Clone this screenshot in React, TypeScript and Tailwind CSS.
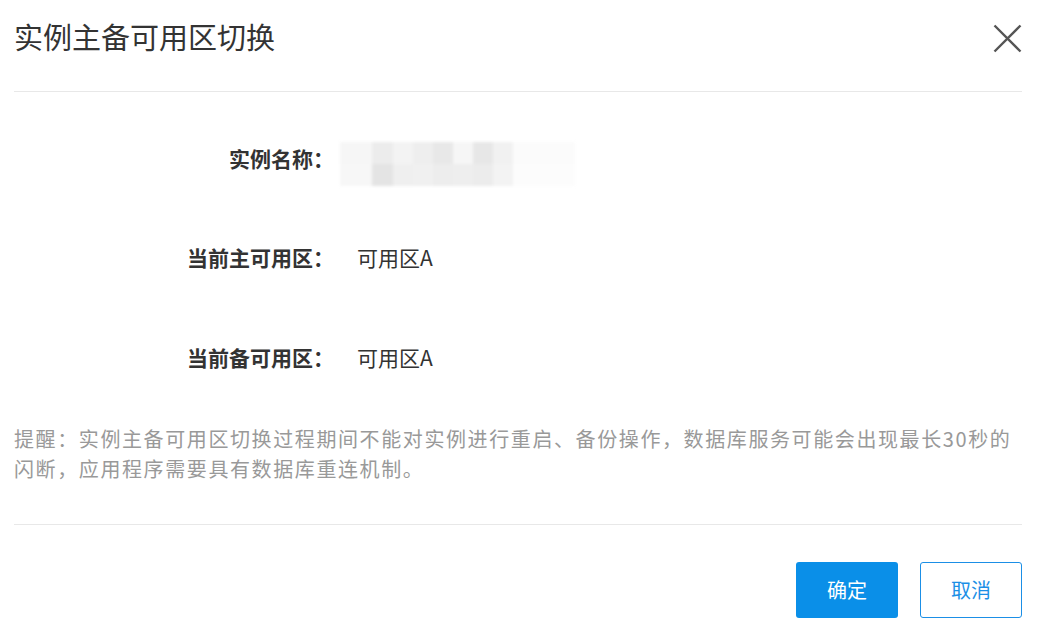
import React from 'react'

const font = { fontFamily: '"Noto Sans CJK SC", "Noto Sans", sans-serif' }

// blurred instance name placeholder
const topBlocks = [
  'w-[32px] bg-[#f6f6f6]',
  'w-[21px] bg-[#ececec]',
  'w-[20px] bg-[#f3f3f3]',
  'w-[20px] bg-[#eeeeee]',
  'w-[20px] bg-[#e8e8e8]',
  'w-[20px] bg-[#f6f6f6]',
  'w-[20px] bg-[#e7e7e7]',
  'w-[20px] bg-[#f1f1f1]',
  'w-[62px] bg-[#fbfbfb]',
]
const bottomBlocks = [
  'w-[32px] bg-[#f7f7f7]',
  'w-[21px] bg-[#e4e4e4]',
  'w-[20px] bg-[#efefef]',
  'w-[20px] bg-[#f0f0f0]',
  'w-[20px] bg-[#ededed]',
  'w-[20px] bg-[#eeeeee]',
  'w-[20px] bg-[#ececec]',
  'w-[20px] bg-[#f3f3f3]',
  'w-[62px] bg-[#fcfcfc]',
]

const Row: React.FC<{ label: string; children: React.ReactNode; className?: string }> = ({ label, children, className }) => (
  <div className={`flex items-center h-[44px] ${className ?? ''}`}>
    <div className="w-[320px] text-right text-[21px] font-bold text-[#333]">{label}</div>
    <div className="ml-[23px]">{children}</div>
  </div>
)

export default function App() {
  return (
    <div className="w-[1046px] h-[638px] bg-white pl-[14px] pr-[24px] overflow-hidden" style={font}>
      {/* header */}
      <div className="h-[92px] flex items-start justify-between border-b border-[#e8e8e8]">
        <h2 className="pt-[17px] text-[29px] leading-[38px] text-[#333]">实例主备可用区切换</h2>
        <button className="mt-[24px] w-[29px] h-[29px] flex items-center justify-center">
          <svg width="29" height="29" viewBox="0 0 29 29">
            <path d="M1.5 1.5 L27.5 27.5 M27.5 1.5 L1.5 27.5" stroke="#555" strokeWidth="2.4" fill="none" />
          </svg>
        </button>
      </div>

      {/* body */}
      <Row label="实例名称：" className="mt-[45px]">
        <div className="mt-[10px] ml-[-17px] blur-[1.5px] flex flex-col">
          <div className="flex h-[22px]">
            {topBlocks.map((c, i) => <div key={i} className={c} />)}
          </div>
          <div className="flex h-[22px]">
            {bottomBlocks.map((c, i) => <div key={i} className={c} />)}
          </div>
        </div>
      </Row>
      <Row label="当前主可用区：" className="mt-[55px]">
        <span className="text-[21px] text-[#333]">可用区A</span>
      </Row>
      <Row label="当前备可用区：" className="mt-[56px]">
        <span className="text-[21px] text-[#333]">可用区A</span>
      </Row>

      <p className="mt-[44px] text-[20px] leading-[30px] tracking-[1.6px] text-[#999] pb-[40px] border-b border-[#e8e8e8]">
        提醒：实例主备可用区切换过程期间不能对实例进行重启、备份操作，数据库服务可能会出现最长30秒的闪断，应用程序需要具有数据库重连机制。
      </p>

      {/* footer */}
      <div className="flex justify-end gap-[22px] pt-[37px]">
        <button className="w-[102px] h-[56px] rounded-[3px] bg-[#0a8fe8] text-white text-[20px]">确定</button>
        <button className="w-[102px] h-[56px] rounded-[3px] border border-[#1b8fe6] bg-white text-[#1b8fe6] text-[20px]">取消</button>
      </div>
    </div>
  )
}
